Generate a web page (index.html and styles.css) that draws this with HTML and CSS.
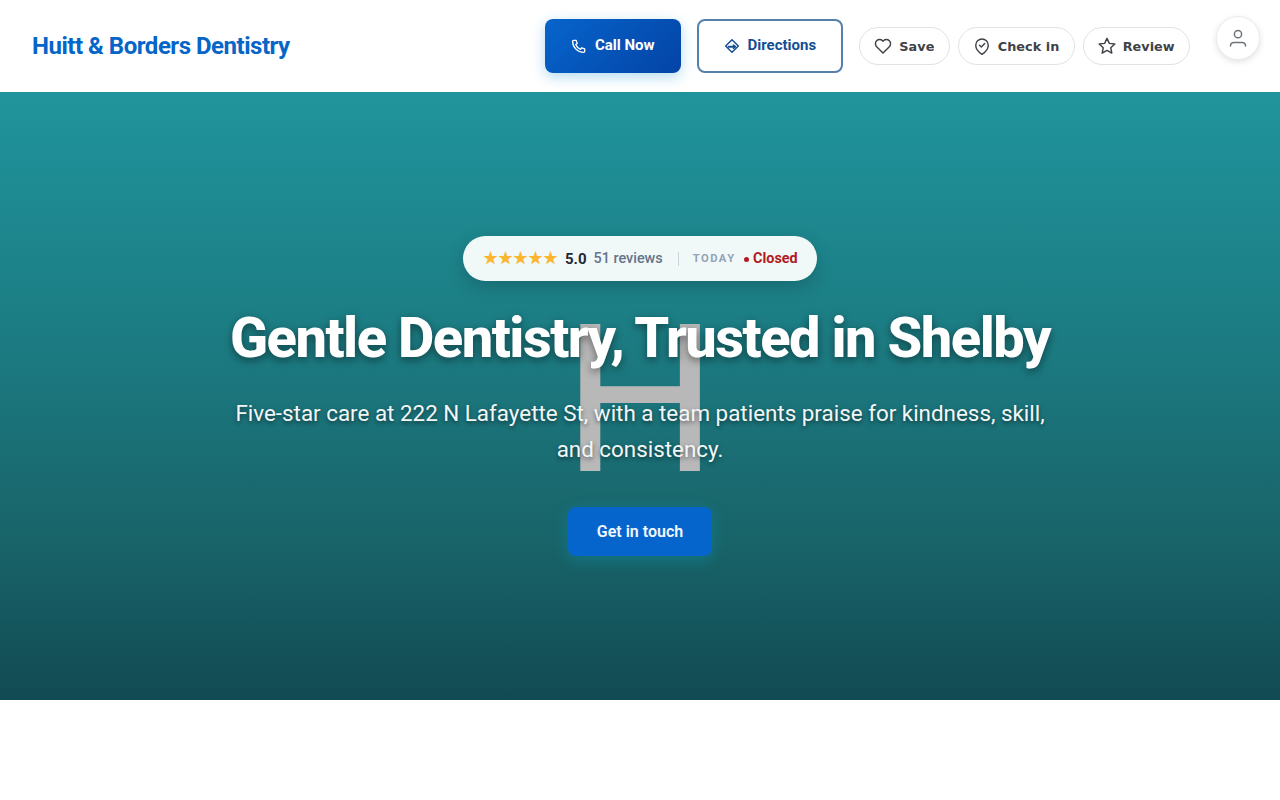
FILE: index.html
```html
<!DOCTYPE html>
<html lang="en">
<head>
<meta charset="utf-8">
<title>Huitt &amp; Borders Dentistry</title>
<link rel="stylesheet" href="styles.css">
</head>
<body>
<header class="nav">
  <a class="logo" href="#">Huitt &amp; Borders Dentistry</a>
  <div class="actions">
    <a class="btn btn-call" href="#">
      <svg class="btn-icon" viewBox="0 0 24 24" fill="none" stroke="currentColor" stroke-width="2" stroke-linecap="round" stroke-linejoin="round"><path d="M4 3.500h3.600l1.700 4.600-2.200 1.600a12 12 0 0 0 7.200 7.200l1.600-2.200 4.600 1.700V20a1.600 1.600 0 0 1-1.700 1.600A16.800 16.800 0 0 1 2.400 5.200 1.600 1.600 0 0 1 4 3.500z"/></svg>
      <span>Call Now</span>
    </a>
    <a class="btn btn-dir" href="#">
      <svg class="btn-icon" viewBox="0 0 24 24" fill="none" stroke="currentColor" stroke-width="2.200" stroke-linecap="round" stroke-linejoin="round"><path d="M12 2.500l9.500 9.500-9.500 9.500L2.500 12z"/><path d="M7 13h9" stroke-width="3"/><path d="M14 10.500l3 2.500-3 2.500"/></svg>
      <span>Directions</span>
    </a>
    <a class="chip" href="#">
      <svg class="chip-icon" viewBox="0 0 24 24" fill="none" stroke="currentColor" stroke-width="1.700" stroke-linejoin="round"><path d="M12 20.500l-7.600-7.700a5 5 0 0 1 0-7.100 5 5 0 0 1 7.100 0l.5.500.5-.500a5 5 0 0 1 7.100 0 5 5 0 0 1 0 7.100z"/></svg>
      <span>Save</span>
    </a>
    <a class="chip" href="#">
      <svg class="chip-icon" viewBox="0 0 24 24" fill="none" stroke="currentColor" stroke-width="1.700" stroke-linecap="round" stroke-linejoin="round"><path d="M12 22c-4.300-2.900-7.500-6.600-7.500-11a7.500 7.500 0 0 1 15 0c0 4.400-3.200 8.100-7.500 11z"/><path d="M9 11l2.200 2.200L15.200 9"/></svg>
      <span>Check in</span>
    </a>
    <a class="chip" href="#">
      <svg class="chip-icon" viewBox="0 0 24 24" fill="none" stroke="currentColor" stroke-width="1.700" stroke-linejoin="round"><path d="M12 2.800l2.800 6 6.600.8-4.900 4.500 1.300 6.500-5.800-3.300-5.800 3.300 1.300-6.500-4.900-4.500 6.600-.8z"/></svg>
      <span>Review</span>
    </a>
  </div>
  <button class="avatar" type="button" aria-label="Account">
    <svg viewBox="0 0 24 24" fill="none" stroke="currentColor" stroke-width="1.500" stroke-linecap="round"><circle cx="12" cy="8.200" r="3.600"/><path d="M4.500 20v-.2a3.400 3.400 0 0 1 3.400-3.400h8.200a3.400 3.400 0 0 1 3.400 3.400v.2"/></svg>
  </button>
</header>
<main class="hero">
  <div class="watermark">H</div>
  <div class="hero-content">
    <div class="rating">
      <span class="stars">★★★★★</span>
      <strong class="score">5.0</strong>
      <span class="reviews">51 reviews</span>
      <span class="divider"></span>
      <span class="today">TODAY</span>
      <span class="dot"></span>
      <span class="status">Closed</span>
    </div>
    <h1 class="title">Gentle Dentistry, Trusted in Shelby</h1>
    <p class="lead">Five-star care at 222 N Lafayette St, with a team patients praise for kindness, skill, and consistency.</p>
    <a class="cta" href="#">Get in touch</a>
  </div>
</main>
</body>
</html>
```
FILE: styles.css
```css
* { box-sizing: border-box; }
html, body { margin: 0; padding: 0; }
body { background: #fff; font-family: Roboto, "Liberation Sans", sans-serif; height: 800px; overflow: hidden; }
a { text-decoration: none; }

.nav { position: relative; height: 92px; display: flex; align-items: center; justify-content: space-between; padding: 0 90px 0 32px; background: #fff; }
.logo { font-size: 24px; font-weight: 700; letter-spacing: -0.48px; color: #0665c8; }
.actions { display: flex; align-items: center; gap: 8px; }

.btn { display: flex; align-items: center; justify-content: center; gap: 8px; height: 54px; padding-right: 1px; border-radius: 8px; font-size: 15px; font-weight: 700; margin-right: 8px; }
.btn span { position: relative; top: -1px; }
.btn-icon { width: 16px; height: 16px; flex: none; }
.btn-call { width: 136px; color: #fff; background: linear-gradient(135deg, #0665cc, #0443a5); box-shadow: 0 4px 14px rgba(0, 140, 210, .3); }
.btn-dir { width: 146px; color: #134f92; background: #fff; border: 2px solid #5580ab; }

.chip { display: flex; align-items: center; gap: 6px; height: 38px; padding: 0 14.300px 0 13px; border: 1px solid #e2e2e2; border-radius: 19px; background: #fff; color: #3f4248; font-family: "DejaVu Sans", sans-serif; font-size: 12.800px; font-weight: 700; letter-spacing: 0.050px; }
.chip-icon { width: 20px; height: 20px; flex: none; }

.avatar { position: absolute; top: 16px; right: 20px; width: 44px; height: 44px; padding: 0; display: flex; align-items: center; justify-content: center; border: 1px solid #ececec; border-radius: 50%; background: #fff; color: #6e7379; box-shadow: 0 2px 6px rgba(0, 0, 0, .12); }
.avatar svg { width: 24px; height: 24px; }

.hero { position: relative; height: 608px; display: flex; align-items: center; justify-content: center; background: linear-gradient(180deg, #20949c 0%, #1c7c83 40%, #186368 75%, #124a53 100%); }
.watermark { position: absolute; left: 0; right: 0; top: 187px; text-align: center; font-family: "Liberation Sans", sans-serif; font-size: 214px; line-height: 236px; color: #b8b8b8; }
.hero-content { position: relative; display: flex; flex-direction: column; align-items: center; width: 820px; }

.rating { display: flex; align-items: center; height: 45px; width: 354px; padding: 0 19px 0 20px; border-radius: 23px; background: rgba(255, 255, 255, .94); box-shadow: 0 6px 18px rgba(0, 0, 0, .18); font-size: 14.400px; white-space: nowrap; }
.stars { margin-bottom: 4px; font-size: 15px; line-height: 20px; color: #fbb62e; font-family: "Noto Sans CJK SC", "DejaVu Sans", sans-serif; }
.score { margin-left: 7px; font-size: 15px; font-weight: 700; color: #1f2733; }
.reviews { margin-left: 7px; font-weight: 500; color: #64748b; }
.divider { width: 1px; height: 14px; margin: 0 14px 0 15px; background: #cdd3da; }
.today { font-size: 11.200px; font-weight: 700; letter-spacing: 1.500px; color: #94a3b8; }
.dot { width: 5px; height: 5px; margin: 1px 4.500px 0 8px; border-radius: 50%; background: #b21a1f; flex: none; }
.status { font-weight: 700; color: #b21a1f; }

.title { margin: 24px 0 0; font-size: 56px; font-weight: 800; line-height: 66px; letter-spacing: -1.500px; color: #fff; white-space: nowrap; text-shadow: 0 3px 8px rgba(0, 0, 0, .45); }
.lead { margin: 24px 0 0; width: 820px; font-size: 22.400px; line-height: 36px; text-align: center; color: #f2f7f7; text-shadow: 0 2px 4px rgba(0, 0, 0, .5); }
.cta { display: flex; align-items: center; justify-content: center; margin-top: 40px; width: 144px; height: 49px; border-radius: 8px; background: #0665cc; color: #f2f7ff; font-size: 16px; font-weight: 600; box-shadow: 0 4px 16px rgba(6, 170, 210, .3); }
```
